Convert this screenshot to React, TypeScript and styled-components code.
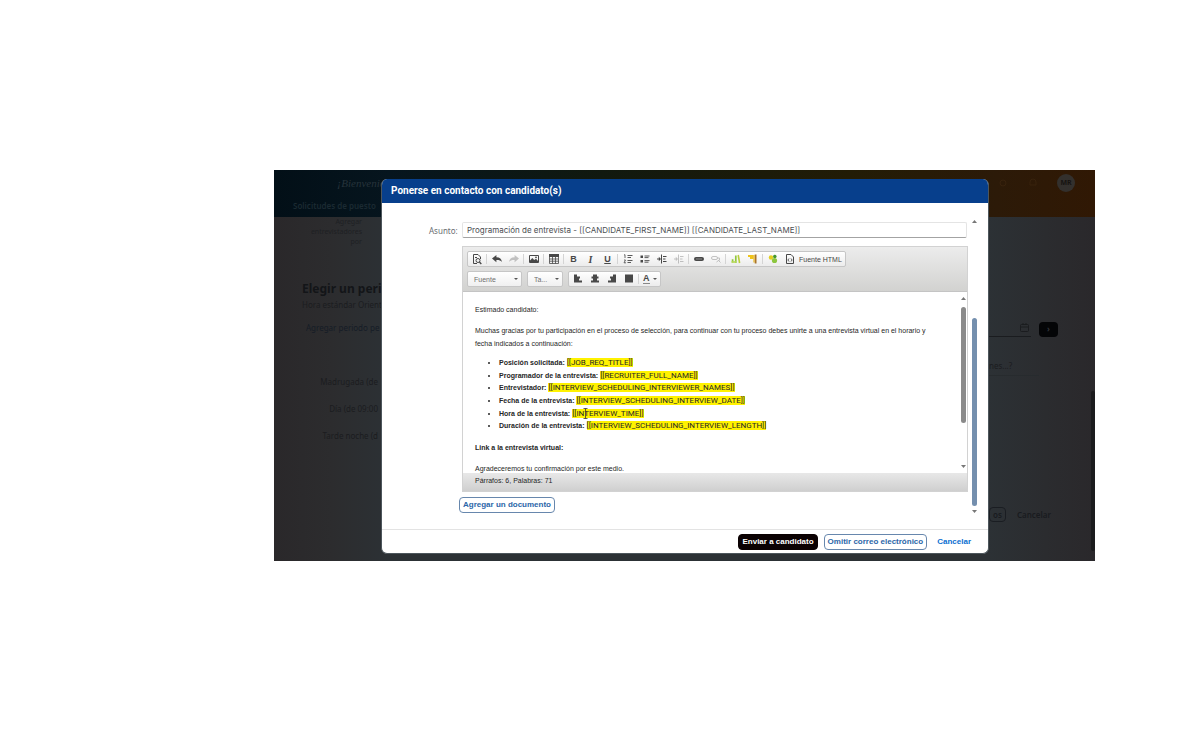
import React from "react";
import styled, { createGlobalStyle } from "styled-components";

const GlobalStyle = createGlobalStyle`
  * { box-sizing: border-box; }
  body { margin: 0; background: #fff; font-family: "Noto Sans", sans-serif; }
  button, input, select { font: inherit; margin: 0; }
`;

const Page = styled.main`
  padding: 170px 105px 189px 274px;
`;

const Stage = styled.div`
  display: grid;
  overflow: hidden;
  background: #2c2c2e;
  > * { grid-area: 1 / 1; }
`;

const Backdrop = styled.div`
  display: flex;
  flex-direction: column;
  min-width: 0;
  background: linear-gradient(90deg, #2a282a 0, #2c2c2e 7%, #2c3135 14%, #2c3135 87%, #2b2c2f 94%, #2a282b 100%);
  color: #1b1c1f;
  font-family: "Noto Sans", sans-serif;
  font-size: 8px;
  line-height: 10px;
`;

const AppBar = styled.header`
  display: flex;
  justify-content: space-between;
  height: 47px;
  padding: 4px 20px 4px 19px;
  background: linear-gradient(90deg, #020f17 0, #06151e 14%, #11190f 40%, #221c06 70%, #2c1a08 88%, #301804 100%);
`;

const Brand = styled.div`
  display: flex;
  flex-direction: column;
  justify-content: space-between;
  color: #26333b;
`;

const Welcome = styled.span`
  padding-left: 44px;
  font-family: "Liberation Serif", serif;
  font-style: italic;
  font-size: 11px;
  line-height: 18px;
`;

const Section = styled.span`
  line-height: 14px;
  font-weight: 600;
  color: #1b2a32;
`;

const Tools = styled.div`
  display: flex;
  align-items: center;
  height: 18px;
  gap: 18px;
  color: #38220d;
`;

const Avatar = styled.span`
  display: grid;
  place-items: center;
  width: 18px;
  height: 18px;
  border-radius: 50%;
  background: #33302d;
  color: #161311;
  font-weight: 700;
  font-size: 7px;
`;

const Columns = styled.div`
  display: flex;
  flex: 1;
`;

const Criteria = styled.div`
  display: flex;
  flex-direction: column;
  width: 107px;
  margin-right: auto;
  padding-left: 28px;
  white-space: nowrap;
`;

const Interviewers = styled.p`
  margin: 0 19px 33px 0;
  font-size: 7px;
  text-align: right;
  color: #1e2023;
`;

const BackTitle = styled.h2`
  margin: 0;
  font-size: 12px;
  line-height: 18px;
  color: #131518;
`;

const Zone = styled.p`
  margin: 2px 0 13px;
`;

const Period = styled.a`
  margin: 0 0 44px 4px;
  color: #151c26;
  text-decoration: none;
`;

const Slots = styled.ul`
  display: flex;
  flex-direction: column;
  gap: 17px;
  margin: 0;
  padding: 0 3px 0 0;
  list-style: none;
  text-align: right;
`;

const Schedule = styled.div`
  display: flex;
  flex-direction: column;
  width: 102px;
  padding-top: 103px;
`;

const DateRow = styled.div`
  display: flex;
  align-items: center;
  gap: 8px;
  height: 18px;
`;

const DateField = styled.span`
  display: flex;
  justify-content: flex-end;
  width: 42px;
  padding-bottom: 2px;
  border-bottom: 1px solid #1a1c1f;
`;

const NextButton = styled.button`
  display: grid;
  place-items: center;
  width: 19px;
  height: 15px;
  padding: 0;
  border: 0;
  border-radius: 4px;
  background: #040507;
  color: #33363a;
  font-weight: 700;
`;

const Question = styled.p`
  width: 50px;
  margin: 23px 0 0;
  padding-bottom: 4px;
  border-bottom: 1px solid #272b2e;
`;

const BackActions = styled.div`
  display: flex;
  align-items: center;
  gap: 8px;
  margin-top: 131px;
`;

const BackButton = styled.button<{ $outlined?: boolean }>`
  height: 15px;
  padding: 0 3px;
  border: ${(p) => (p.$outlined ? "1px solid #1a1d22" : "0")};
  border-radius: 4px;
  background: none;
  color: #191b1f;
  font-weight: 600;
`;

const PageScroll = styled.div`
  align-self: flex-end;
  width: 4px;
  height: 160px;
  margin: 0 0 10px;
  border-radius: 2px;
  background: #1b1b1d;
`;

const Dialog = styled.section`
  display: flex;
  flex-direction: column;
  margin: 9px 106px 7px 107px;
  border: 1px solid #4d565c;
  border-top: 0;
  border-radius: 6px;
  background: #fff;
  overflow: hidden;
  z-index: 1;
`;

const DialogHeader = styled.h1`
  margin: 0;
  padding: 0 9px;
  background: #073f8c;
  color: #fff;
  font-family: Roboto, sans-serif;
  font-size: 10px;
  font-weight: 700;
  line-height: 24px;
`;

const DialogBody = styled.div`
  display: flex;
  gap: 3px;
  padding: 15px 11px 16px 47px;
`;

const Form = styled.form`
  display: flex;
  flex: 1;
  flex-direction: column;
  align-items: stretch;
  min-width: 0;
  padding-top: 4px;
`;

const SubjectRow = styled.div`
  display: flex;
  align-items: center;
  gap: 4px;
  padding-right: 1px;
`;

const SubjectLabel = styled.label`
  width: 29px;
  color: #6b6e73;
  font-size: 8px;
`;

const SubjectInput = styled.input`
  flex: 1;
  height: 16px;
  padding: 0 4px;
  border: 1px solid #e4e4e4;
  border-bottom-color: #a3a3a3;
  border-radius: 2px;
  color: #4b4e52;
  font-family: Inter, sans-serif;
  font-size: 8px;
  outline: 0;
`;

const Editor = styled.div`
  margin: 8px 0 5px 33px;
  border: 1px solid #d2d2d2;
  font-family: "Liberation Sans", sans-serif;
  font-size: 7px;
  color: #262626;
`;

const Toolbar = styled.div`
  display: flex;
  flex-wrap: wrap;
  align-content: flex-start;
  gap: 4px 5px;
  height: 45px;
  padding: 4px;
  border-bottom: 1px solid #c4c4c4;
  background: linear-gradient(#ececec, #d2d2d0);
`;

const ToolGroup = styled.div<{ $full?: boolean }>`
  display: flex;
  align-items: center;
  height: 16px;
  margin-right: ${(p) => (p.$full ? "100px" : "0")};
  border: 1px solid #c6c6c6;
  border-radius: 2px;
  background: linear-gradient(#fff, #ececec);
`;

const Tool = styled.button<{ $dim?: boolean; $wide?: boolean }>`
  display: flex;
  align-items: center;
  justify-content: center;
  gap: 3px;
  width: ${(p) => (p.$wide ? "auto" : "17px")};
  height: 14px;
  padding: ${(p) => (p.$wide ? "0 3px" : "0")};
  border: 0;
  background: none;
  color: #484848;
  opacity: ${(p) => (p.$dim ? 0.3 : 1)};
`;

const Divider = styled.span`
  width: 1px;
  height: 10px;
  margin: 0 1px;
  background: #d4d4d4;
`;

const Picker = styled.span<{ $wide?: boolean }>`
  display: flex;
  align-items: center;
  width: ${(p) => (p.$wide ? "55px" : "36px")};
  height: 16px;
  padding-right: 3px;
  border: 1px solid #c6c6c6;
  border-radius: 2px;
  background: linear-gradient(#fff, #f0f0f0);
`;

const PickerSelect = styled.select`
  flex: 1;
  min-width: 0;
  padding: 0 0 0 6px;
  border: 0;
  background: none;
  color: #6f6f6f;
  appearance: none;
`;

const Content = styled.div`
  display: flex;
  height: 181px;
  overflow: hidden;
`;

const Message = styled.article`
  display: flex;
  flex: 1;
  flex-direction: column;
  gap: 8px;
  min-width: 0;
  padding: 11px 20px 0 12px;
  line-height: 13px;
`;

const Paragraph = styled.p`
  margin: 0;
`;

const Fields = styled.ul`
  display: grid;
  grid-auto-rows: 1fr;
  flex: none;
  height: 76px;
  margin: -1px 0 0;
  padding-left: 24px;
  line-height: 12px;
`;

const Token = styled.span`
  background: #fff200;
  font-family: Roboto, sans-serif;
  font-size: 8px;
`;

const Cursor = styled.svg`
  position: absolute;
  left: 11px;
  top: -1px;
`;

const HoverToken = styled(Token)`
  position: relative;
`;

const Scroller = styled.div<{ $blue?: boolean }>`
  display: flex;
  flex-direction: column;
  align-items: center;
  justify-content: space-between;
  width: ${(p) => (p.$blue ? "6px" : "8px")};
  padding: ${(p) => (p.$blue ? "2px 0 0" : "5px 0 5px")};
`;

const Thumb = styled.span<{ $blue?: boolean }>`
  width: 5px;
  height: ${(p) => (p.$blue ? "188px" : "116px")};
  margin: ${(p) => (p.$blue ? "90px 0 0" : "0 0 36px")};
  border-radius: 3px;
  background: ${(p) => (p.$blue ? "#748fae" : "#8a8a8a")};
`;

const Status = styled.div`
  height: 18px;
  padding: 0 12px;
  background: linear-gradient(#e8e8e8, #cfcfcf);
  line-height: 15px;
`;

const Button = styled.button<{ $kind?: "solid" | "link" }>`
  height: 16px;
  padding: 0 3px;
  border: 1px solid ${(p) => (p.$kind === "solid" ? "#0b0203" : p.$kind === "link" ? "transparent" : "#6787ad")};
  border-radius: 4px;
  background: ${(p) => (p.$kind === "solid" ? "#0b0203" : "transparent")};
  color: ${(p) => (p.$kind === "solid" ? "#fff" : p.$kind === "link" ? "#0a6ed1" : "#2b66a8")};
  font-family: "Liberation Sans", sans-serif;
  font-size: 8px;
  font-weight: 700;
  line-height: 12px;
  white-space: nowrap;
`;

const Attach = styled(Button)`
  align-self: flex-start;
  margin-left: 30px;
`;

const DialogFooter = styled.footer`
  display: flex;
  align-items: center;
  justify-content: flex-end;
  gap: 6px;
  height: 24px;
  padding: 0 13px;
  border-top: 1px solid #e3e3e3;
`;

const Caret = ({ up }: { up?: boolean }) => (
  <svg width="5" height="3" viewBox="0 0 5 3" fill="#777" aria-hidden="true">
    <path d={up ? "M0 3L2.5 0L5 3Z" : "M0 0H5L2.5 3Z"} />
  </svg>
);

const SmallCaret = () => (
  <svg width="4" height="2" viewBox="0 0 4 2" fill="#555" aria-hidden="true">
    <path d="M0 0H4L2 2Z" />
  </svg>
);

const Icon = ({ children }: { children: React.ReactNode }) => (
  <svg width="12" height="12" viewBox="0 0 12 12" fill="none" stroke="currentColor" strokeWidth="1" aria-hidden="true">
    {children}
  </svg>
);

const fill = { fill: "currentColor", stroke: "none" };

const icons = {
  preview: (
    <>
      <path d="M6 10.5H2.5V1.5H7L9.5 4V6" />
      <path d="M4 4.5H6" />
      <circle cx="7" cy="7.5" r="2" />
      <path d="M8.4 9L10.3 11" strokeWidth="1.4" />
    </>
  ),
  undo: <path {...fill} d="M1 5.6L5.4 2V4.2C8.8 4.3 10.6 6 10.9 9C9.6 7.5 8 6.9 5.4 7V9.2Z" />,
  redo: <path {...fill} d="M11 5.6L6.6 2V4.2C3.2 4.3 1.4 6 1.1 9C2.4 7.5 4 6.9 6.6 7V9.2Z" />,
  image: (
    <>
      <path d="M1.5 2.5H10.5V9.5H1.5Z" />
      <path {...fill} d="M2 9V7.5L4.3 5L6.2 7L8 5.8L10 8V9Z" />
      <circle {...fill} cx="8" cy="4.3" r="0.9" />
    </>
  ),
  table: (
    <>
      <path {...fill} d="M1 1H11V4H1Z" />
      <path d="M1.5 2V10.5H10.5V2M1.5 6H10.5M1.5 8.2H10.5M4.5 4V10.5M7.5 4V10.5" strokeWidth="0.8" />
    </>
  ),
  ordered: (
    <>
      <path d="M5.5 2.5H10.5M5.5 4.5H9M5.5 7.5H10.5M5.5 9.5H9" strokeWidth="0.9" />
      <path d="M2 2L3 1.7V5M2 7H3.5L2 9.8H4" strokeWidth="0.8" />
    </>
  ),
  bullets: (
    <>
      <path d="M5.5 3H10.5M5.5 4.6H9.5M5.5 7.6H10.5M5.5 9.2H9.5" strokeWidth="0.9" />
      <path {...fill} d="M1.5 2.5H4V5H1.5ZM1.5 7H4V9.5H1.5Z" />
    </>
  ),
  outdent: (
    <>
      <path d="M5.5 1.5V10.5M7 3.5H10.5M7 6H9.5M7 8.5H10.5M1 6H4" />
      <path {...fill} d="M2.8 3.8L5 6L2.8 8.2Z" />
    </>
  ),
  link: (
    <>
      <rect x="1" y="4" width="10" height="4" rx="2" fill="currentColor" stroke="none" />
      <path d="M3 6H9" stroke="#bbb" strokeWidth="0.6" />
    </>
  ),
  unlink: (
    <>
      <rect x="1.5" y="3.5" width="6" height="3" rx="1.5" />
      <path d="M7 5H9.5V7.5M8 7L10.5 9.5M6.5 9L8.5 7.5" />
    </>
  ),
  chart: (
    <>
      <path d="M2.6 9.5V6.2M5.8 10V2.5" stroke="#93c83e" strokeWidth="1.7" />
      <path d="M1.5 9H6" stroke="#b7d957" strokeWidth="1.6" />
      <path d="M8.2 2L9.6 10" stroke="#b9cf3a" strokeWidth="1.6" />
    </>
  ),
  media: (
    <>
      <path d="M1 3H6.5M3 5H6.5" stroke="#f0c419" strokeWidth="1.9" />
      <path d="M8.6 1.5V10.5" stroke="#a8742b" strokeWidth="1.8" />
      <path d="M7 2V9.5" stroke="#e6b422" strokeWidth="1.2" />
    </>
  ),
  merge: (
    <>
      <circle cx="4" cy="4.5" r="2.2" fill="#e3cf1f" stroke="none" />
      <circle cx="7.8" cy="3.5" r="1.8" fill="#45962f" stroke="none" />
      <circle cx="7.5" cy="7.5" r="2.6" fill="#8cc63f" stroke="none" />
    </>
  ),
  source: (
    <>
      <path d="M2.5 1.5H7L9.5 4V10.5H2.5Z" />
      <path d="M5 5.5L3.9 7L5 8.5M7 5.5L8.1 7L7 8.5" strokeWidth="0.9" />
    </>
  ),
  left: <path d="M2 2.5H5M2 4.5H8M2 6.5H7M2 8.5H10" strokeWidth="1.8" />,
  center: <path d="M4 2.5H8M2.5 4.5H9.5M4 6.5H8M2 8.5H10" strokeWidth="1.8" />,
  right: <path d="M7 2.5H10M4 4.5H10M5 6.5H10M2 8.5H10" strokeWidth="1.8" />,
  justify: <path d="M2 2.5H10M2 4.5H10M2 6.5H10M2 8.5H10" strokeWidth="1.8" />,
};

const Glyph = styled.span<{ $style: "bold" | "italic" | "under" | "color" }>`
  font-family: ${(p) => (p.$style === "italic" ? '"Liberation Serif", serif' : '"Liberation Sans", sans-serif')};
  font-size: ${(p) => (p.$style === "italic" ? "10px" : "9px")};
  line-height: 9px;
  font-weight: 700;
  font-style: ${(p) => (p.$style === "italic" ? "italic" : "normal")};
  text-decoration: ${(p) => (p.$style === "under" ? "underline" : "none")};
  border-bottom: ${(p) => (p.$style === "color" ? "1px solid #888" : "0")};
`;

type ToolDef = [keyof typeof icons, string, boolean?];

const tool = ([name, label, dim]: ToolDef) => (
  <Tool key={label} type="button" aria-label={label} $dim={dim}>
    <Icon>{icons[name]}</Icon>
  </Tool>
);

const fields: [string, string][] = [
  ["Posición solicitada:", "[[JOB_REQ_TITLE]]"],
  ["Programador de la entrevista:", "[[RECRUITER_FULL_NAME]]"],
  ["Entrevistador:", "[[INTERVIEW_SCHEDULING_INTERVIEWER_NAMES]]"],
  ["Fecha de la entrevista:", "[[INTERVIEW_SCHEDULING_INTERVIEW_DATE]]"],
  ["Hora de la entrevista:", "[[INTERVIEW_TIME]]"],
  ["Duración de la entrevista:", "[[INTERVIEW_SCHEDULING_INTERVIEW_LENGTH]]"],
];

function BackgroundPage() {
  return (
    <Backdrop>
      <AppBar>
        <Brand>
          <Welcome>¡Bienvenido</Welcome>
          <Section>Solicitudes de puesto</Section>
        </Brand>
        <Tools>
          <Icon><circle cx="6" cy="6" r="3" /></Icon>
          <Icon><path d="M3 8V5A3 3 0 0 1 9 5V8Z" /></Icon>
          <Avatar>MR</Avatar>
        </Tools>
      </AppBar>
      <Columns>
        <Criteria>
          <Interviewers>Agregar<br />entrevistadores<br />por</Interviewers>
          <BackTitle>Elegir un peri</BackTitle>
          <Zone>Hora estándar Orient</Zone>
          <Period href="#periodo">Agregar periodo pe</Period>
          <Slots>
            <li>Madrugada (de</li>
            <li>Día (de 09:00</li>
            <li>Tarde noche (d</li>
          </Slots>
        </Criteria>
        <Schedule>
          <DateRow>
            <DateField><Icon><rect x="1.5" y="2.5" width="8" height="7" rx="1" /><path d="M2 5H9M4 1V3M7 1V3" /></Icon></DateField>
            <NextButton type="button">›</NextButton>
          </DateRow>
          <Question>nes...?</Question>
          <BackActions>
            <BackButton type="button" $outlined>os</BackButton>
            <BackButton type="button">Cancelar</BackButton>
          </BackActions>
        </Schedule>
        <PageScroll />
      </Columns>
    </Backdrop>
  );
}

export default function App() {
  return (
    <Page>
      <GlobalStyle />
      <Stage>
        <BackgroundPage />
        <Dialog role="dialog" aria-labelledby="dialog-title">
          <DialogHeader id="dialog-title">Ponerse en contacto con candidato(s)</DialogHeader>
          <DialogBody>
            <Form>
              <SubjectRow>
                <SubjectLabel htmlFor="subject">Asunto:</SubjectLabel>
                <SubjectInput id="subject" defaultValue="Programación de entrevista - [[CANDIDATE_FIRST_NAME]] [[CANDIDATE_LAST_NAME]]" />
              </SubjectRow>
              <Editor>
                <Toolbar>
                  <ToolGroup $full>
                    {tool(["preview", "Vista previa"])}
                    <Divider />
                    {([["undo", "Deshacer"], ["redo", "Rehacer", true]] as ToolDef[]).map(tool)}
                    <Divider />
                    {tool(["image", "Imagen"])}
                    <Divider />
                    {tool(["table", "Tabla"])}
                    <Divider />
                    <Tool type="button" aria-label="Negrita"><Glyph $style="bold">B</Glyph></Tool>
                    <Tool type="button" aria-label="Cursiva"><Glyph $style="italic">I</Glyph></Tool>
                    <Tool type="button" aria-label="Subrayado"><Glyph $style="under">U</Glyph></Tool>
                    <Divider />
                    {([["ordered", "Numeración"], ["bullets", "Viñetas"], ["outdent", "Aumentar sangría"]] as ToolDef[]).map(tool)}
                    {tool(["outdent", "Reducir sangría", true])}
                    <Divider />
                    {([["link", "Vínculo"], ["unlink", "Quitar vínculo", true]] as ToolDef[]).map(tool)}
                    <Divider />
                    {([["chart", "Gráfico"], ["media", "Multimedia"]] as ToolDef[]).map(tool)}
                    <Divider />
                    {tool(["merge", "Campos"])}
                    <Tool type="button" $wide><Icon>{icons.source}</Icon>Fuente HTML</Tool>
                  </ToolGroup>
                  <Picker $wide>
                    <PickerSelect aria-label="Fuente"><option>Fuente</option></PickerSelect>
                    <SmallCaret />
                  </Picker>
                  <Picker>
                    <PickerSelect aria-label="Tamaño"><option>Ta...</option></PickerSelect>
                    <SmallCaret />
                  </Picker>
                  <ToolGroup>
                    {([["left", "Izquierda"], ["center", "Centrar"], ["right", "Derecha"], ["justify", "Justificar"]] as ToolDef[]).map(tool)}
                    <Divider />
                    <Tool type="button" $wide aria-label="Color de texto"><Glyph $style="color">A</Glyph><SmallCaret /></Tool>
                  </ToolGroup>
                </Toolbar>
                <Content>
                  <Message>
                    <Paragraph>Estimado candidato:</Paragraph>
                    <Paragraph>
                      Muchas gracias por tu participación en el proceso de selección, para continuar con tu proceso debes unirte a una entrevista virtual en el horario y fecha indicados a continuación:
                    </Paragraph>
                    <Fields>
                      {fields.map(([name, token]) => (
                        <li key={name}>
                          <b>{name}</b>{" "}
                          {token === "[[INTERVIEW_TIME]]" ? (
                            <HoverToken>
                              {token}
                              <Cursor width="5" height="11" viewBox="0 0 5 11" fill="none" stroke="#333" strokeWidth="0.8" aria-hidden="true">
                                <path d="M0.5 0.5H4.5M2.5 0.5V10.5M0.5 10.5H4.5" />
                              </Cursor>
                            </HoverToken>
                          ) : (
                            <Token>{token}</Token>
                          )}
                        </li>
                      ))}
                    </Fields>
                    <Paragraph><b>Link a la entrevista virtual:</b></Paragraph>
                    <Paragraph>Agradeceremos tu confirmación por este medio.</Paragraph>
                  </Message>
                  <Scroller>
                    <Caret up />
                    <Thumb />
                    <Caret />
                  </Scroller>
                </Content>
                <Status>Párrafos: 6, Palabras: 71</Status>
              </Editor>
              <Attach type="button">Agregar un documento</Attach>
            </Form>
            <Scroller $blue>
              <Caret up />
              <Thumb $blue />
              <Caret />
            </Scroller>
          </DialogBody>
          <DialogFooter>
            <Button type="button" $kind="solid">Enviar a candidato</Button>
            <Button type="button">Omitir correo electrónico</Button>
            <Button type="button" $kind="link">Cancelar</Button>
          </DialogFooter>
        </Dialog>
      </Stage>
    </Page>
  );
}
